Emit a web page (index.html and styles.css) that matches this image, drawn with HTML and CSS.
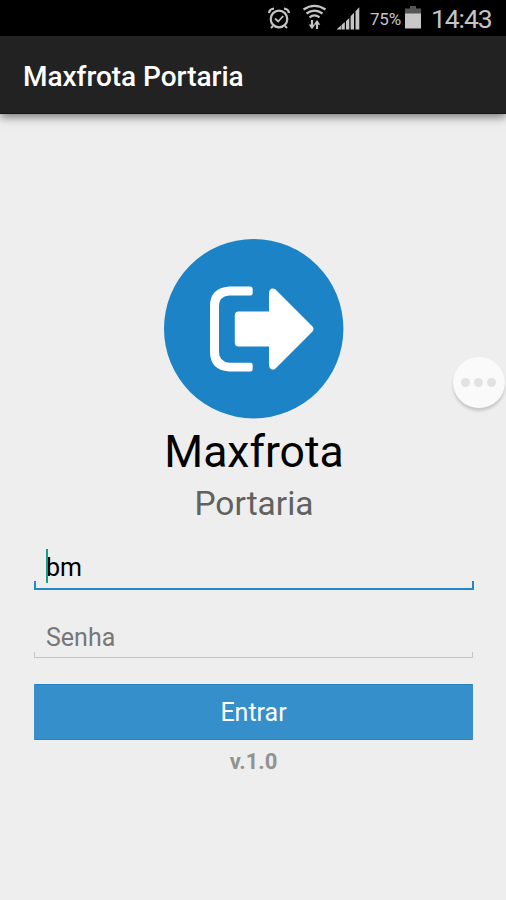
FILE: index.html
```html
<!DOCTYPE html>
<html lang="pt-BR">
<head>
<meta charset="utf-8">
<title>Maxfrota Portaria</title>
<link rel="stylesheet" href="styles.css">
</head>
<body>
<div class="status">
  <svg class="status-icons" width="100" height="36" viewBox="264 0 100 36" fill="none" stroke="#c4c4c4">
    <circle cx="279" cy="19" r="8.300" stroke-width="2.200"/>
    <path d="M275 18.500l3.200 3 5-5.500" stroke-width="1.800"/>
    <path d="M269 13a5 5 0 0 1 5-4.400M289 13a5 5 0 0 0-5-4.400" stroke-width="2.400"/>
    <path d="M273 26l-2 2M285 26l2 2" stroke-width="2"/>
    <path d="M303.500 9.500q11-7.400 22 0M306.500 13.500q8-5.600 16 0M309.500 17.300q5-3.800 10 0" stroke-width="2.300"/>
    <path d="M312 20v8M317 29v-8" stroke-width="2.200"/>
    <path d="M308.700 24.500l3.300 4.800 3.300-4.800zM313.700 24.800l3.300-4.800 3.300 4.800z" fill="#c4c4c4" stroke="none"/>
    <path d="M336.500 29.500l4.500-4v4zM341.500 25l3.300-3v7.500h-3.300zM346 21l3.300-3v11.500h-3.300zM350.600 16.300l3.400-3.500v16.700h-3.400zM355.500 11.300l3.800-4v22.200h-3.800z" fill="#c4c4c4" stroke="none"/>
  </svg>
  <span class="percent">75%</span>
  <svg class="battery" width="18" height="36" viewBox="404 0 18 36">
    <path d="M410 6h6v2.500h5V14h-16V8.500h5z" fill="#555"/>
    <path d="M405 13.500h16V28.500h-16z" fill="#c8c8c8"/>
  </svg>
  <span class="clock">14:43</span>
</div>
<header class="appbar"><h1>Maxfrota Portaria</h1></header>
<main>
  <svg class="logo" width="180" height="180" viewBox="164 239 180 180">
    <circle cx="253.700" cy="328.700" r="89.700" fill="#1c84c6"/>
    <path d="M250.500 286.500H229Q210 288 210 306V352Q210 370 229 371.500H250.500Q252.700 371.500 252.700 369V365Q252.700 362.700 250.500 362.700H229Q219 361.500 219 352V306Q219 296.500 229 295.500H250.500Q252.700 295.500 252.700 293V289Q252.700 286.500 250.500 286.500Z" fill="#fff"/>
    <path d="M238.500 311.500H269V292.500Q270 287 275 289L312.500 326.500Q314.500 329 312.500 331.500L275 369Q270 371 269 365.500V346.500H238.500Q234.800 346.500 234.800 342.500V315.500Q234.800 311.500 238.500 311.500Z" fill="#fff"/>
  </svg>
  <h2>Maxfrota</h2>
  <p class="subtitle">Portaria</p>
  <div class="field active"><i class="cursor"></i>bm</div>
  <div class="field password">Senha</div>
  <div class="button">Entrar</div>
  <p class="version">v.1.0</p>
</main>
<div class="bubble"><i></i><i></i><i></i></div>
</body>
</html>
```
FILE: styles.css
```css
* { box-sizing: border-box; margin: 0; padding: 0; }
body { width: 506px; height: 900px; overflow: hidden; background: #eee; font-family: Roboto, sans-serif; color: #000; }
.status { height: 36px; background: #000; color: #c4c4c4; display: flex; padding-left: 264px; white-space: nowrap; }
.status svg { flex: none; display: block; }
.percent { width: 34px; margin-left: 6px; font-size: 17px; line-height: 39px; letter-spacing: -.2px; }
.clock { margin-left: 9px; font-size: 26.500px; line-height: 38px; letter-spacing: -1.100px; }
.appbar { height: 78px; background: #222; border-bottom: 1px solid #151515; padding-left: 23px; box-shadow: 0 3px 9px rgba(0,0,0,.5); }
h1 { font-size: 28px; font-weight: 500; line-height: 82px; letter-spacing: -.03px; color: #fff; white-space: nowrap; }
main { display: flex; flex-direction: column; align-items: center; padding: 125px 32px 0 34px; }
.logo { display: block; flex: none; }
h2 { font-size: 44.500px; font-weight: 400; line-height: 54px; margin-top: 6px; }
.subtitle { font-size: 33.500px; line-height: 40px; margin-top: 5px; color: #616161; }
.field { position: relative; width: 440px; height: 41px; margin-top: 25px; padding-left: 12px; font-size: 25px; line-height: 38px; }
.field::after { content: ""; position: absolute; left: 0; right: 0; bottom: 0; height: 7px; border: 2px solid #2488c4; border-top: 0; }
.cursor { position: absolute; left: 12px; top: 0; width: 2px; height: 34px; background: #169c87; }
.password { height: 39px; margin-top: 29px; color: #777; }
.password::after { border: 1px solid #c4c4c4; border-top: 0; right: 1px; height: 5px; }
.button { width: 439px; height: 56px; margin: 26px 1px 0 0; border-radius: 1px; background: #348fcb; border-top: 1px solid #2382bf; border-bottom: 1px solid #3a7fab; color: #fff; font-size: 25px; line-height: 56px; text-align: center; }
.version { margin: 8px 1px 0 0; font-size: 22px; font-weight: 700; line-height: 28px; color: #929292; }
.bubble { position: absolute; left: 453px; top: 357px; width: 52px; height: 51px; border-radius: 50%; background: #fafafa; box-shadow: 0 3px 3px rgba(0,0,0,.16); display: flex; align-items: center; justify-content: center; gap: 4px; padding-right: 2px; }
.bubble i { width: 9px; height: 9px; border-radius: 50%; background: #e2e2e2; }
```
